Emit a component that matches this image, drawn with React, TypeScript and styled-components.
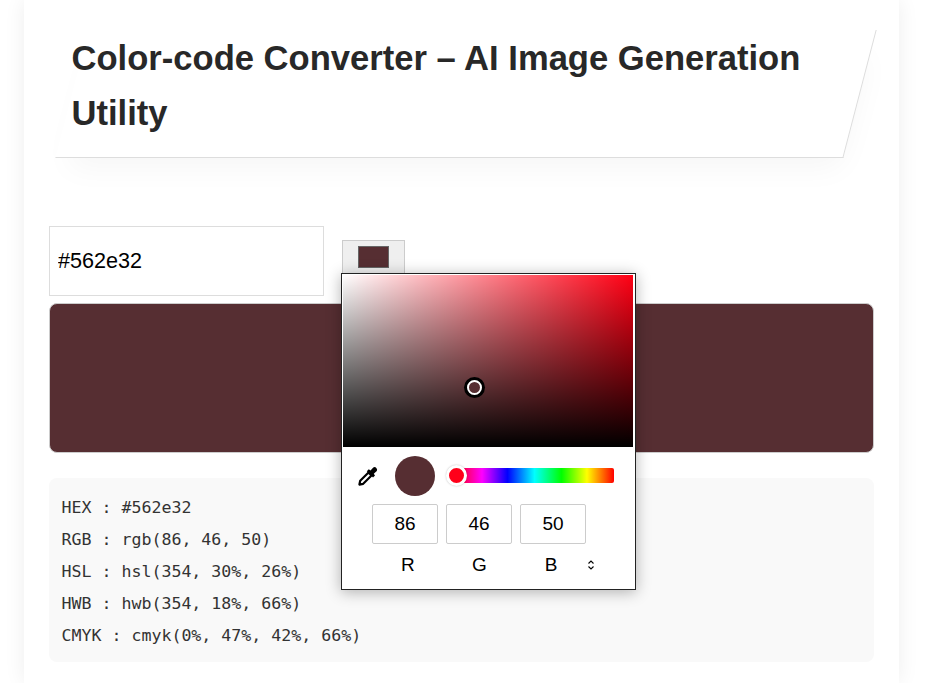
import * as React from 'react'
import styled, {createGlobalStyle} from 'styled-components'

const GlobalStyle = createGlobalStyle`
  html, body {
    margin: 0;
    height: 683px;
    overflow: hidden;
    background: #fff;
    font-family: "Liberation Sans", Arial, sans-serif;
  }
`

const Card = styled.main`
  box-sizing: border-box;
  width: 875px;
  height: 683px;
  margin-left: 24px;
  padding: 30px 25px 0;
  background: #fff;
  box-shadow: 0 0 20px rgba(0, 0, 0, 0.07);
`

const TitleBox = styled.div`
  position: relative;
  box-sizing: border-box;
  width: 821px;
  height: 128px;
  margin-left: 6px;
  padding: 0.5px 0 0 16.5px;
  &::before {
    content: '';
    position: absolute;
    inset: 0 16px 0 17px;
    background: #fff;
    border-right: 1px solid #ddd;
    border-bottom: 1px solid #ddd;
    transform: skewX(-14.6deg);
    box-shadow: 6px 18px 30px -8px rgba(0, 0, 0, 0.04);
  }
`

const Title = styled.h1`
  position: relative;
  margin: 0;
  font-size: 34.6px;
  font-weight: 700;
  line-height: 55px;
  color: #282828;
`

const ControlRow = styled.div`
  display: flex;
  align-items: flex-start;
  margin-top: 68px;
`

const HexInput = styled.input`
  box-sizing: border-box;
  width: 275px;
  height: 70px;
  padding: 0 8px;
  border: 1px solid #ddd;
  outline: none;
  font-family: inherit;
  font-size: 21.6px;
  color: #000;
`

const PickerAnchor = styled.div`
  position: relative;
  margin: 14px 0 0 18px;
`

const SwatchButton = styled.button`
  display: flex;
  align-items: flex-start;
  justify-content: center;
  box-sizing: border-box;
  width: 63px;
  height: 40px;
  padding: 5px 0 0;
  border: 1px solid #ccc;
  background: #efefef;
`

const SwatchChip = styled.span`
  display: block;
  box-sizing: border-box;
  width: 31px;
  height: 22px;
  border: 1px solid #666;
  background: #562e32;
`

const Popover = styled.div`
  position: absolute;
  z-index: 2;
  top: 33px;
  left: -1px;
  box-sizing: border-box;
  width: 295px;
  height: 317px;
  border: 1px solid #222;
  padding: 1px 2px 0 1px;
  background: #fff;
  box-shadow: 0 2px 14px rgba(0, 0, 0, 0.3);
`

const Saturation = styled.div`
  position: relative;
  height: 172px;
  background:
    linear-gradient(to top, #000, rgba(0, 0, 0, 0)),
    linear-gradient(to right, #fff, rgba(255, 255, 255, 0)),
    #ff0014;
`

const SatThumb = styled.span`
  position: absolute;
  top: 105px;
  left: 124px;
  box-sizing: border-box;
  width: 15px;
  height: 15px;
  border: 2px solid #fff;
  border-radius: 50%;
  background: #562e32;
  box-shadow: 0 0 0 3px #000;
`

const SliderRow = styled.div`
  display: flex;
  align-items: center;
  height: 57px;
  padding: 0 0 0 15px;
`

const EyeDropper = styled.svg`
  flex: none;
  width: 20px;
  height: 20px;
`

const PreviewDot = styled.span`
  flex: none;
  width: 40px;
  height: 40px;
  margin-left: 17px;
  border-radius: 50%;
  background: #562e32;
`

const HueTrack = styled.div`
  position: relative;
  width: 159px;
  height: 15px;
  margin-left: 20px;
  border-radius: 2px;
  background: linear-gradient(to right, #f00 0%, #f0f 17%, #00f 33%, #0ff 50%, #0f0 67%, #ff0 83%, #f00 100%);
`

const HueThumb = styled.span`
  position: absolute;
  top: -3px;
  left: -9px;
  box-sizing: border-box;
  width: 21px;
  height: 21px;
  border: 3px solid #fff;
  border-radius: 50%;
  background: #ff001a;
  box-shadow: 0 0 2px rgba(0, 0, 0, 0.25);
`

const FieldRow = styled.div`
  display: flex;
  gap: 8px;
  padding-left: 29px;
`

const Field = styled.input`
  box-sizing: border-box;
  width: 66px;
  height: 40px;
  border: 1px solid #ccc;
  border-radius: 2px;
  outline: none;
  text-align: center;
  font-family: inherit;
  font-size: 19px;
  color: #000;
`

const LabelRow = styled.div`
  display: flex;
  align-items: center;
  height: 42px;
  padding-left: 29px;
`

const ChannelLabel = styled.span`
  width: 71.6px;
  text-align: center;
  font-size: 19px;
  color: #000;
`

const ModeToggle = styled.svg`
  width: 8px;
  height: 12px;
`

const ColorBlock = styled.div`
  box-sizing: border-box;
  height: 150px;
  margin-top: 7px;
  border: 1px solid #ccc;
  border-radius: 8px;
  background: #562e32;
`

const CodeBlock = styled.pre`
  box-sizing: border-box;
  height: 184px;
  margin: 25px 0 0;
  padding: 14px 12.5px;
  border-radius: 8px;
  background: #f9f9f9;
  font-family: "DejaVu Sans Mono", monospace;
  font-size: 16.6px;
  line-height: 32px;
  color: #333;
`

const codeLines = [
  'HEX : #562e32',
  'RGB : rgb(86, 46, 50)',
  'HSL : hsl(354, 30%, 26%)',
  'HWB : hwb(354, 18%, 66%)',
  'CMYK : cmyk(0%, 47%, 42%, 66%)',
]

const channels = [
  {name: 'R', value: 86},
  {name: 'G', value: 46},
  {name: 'B', value: 50},
]

export default function App(): JSX.Element {
  return (
    <>
      <GlobalStyle />
      <Card>
        <TitleBox>
          <Title>Color-code Converter – AI Image Generation Utility</Title>
        </TitleBox>
        <ControlRow>
          <HexInput defaultValue={'#562e32'} />
          <PickerAnchor>
            <SwatchButton type={'button'}>
              <SwatchChip />
            </SwatchButton>
            <Popover>
              <Saturation>
                <SatThumb />
              </Saturation>
              <SliderRow>
                <EyeDropper viewBox='0 0 20 20' fill='none'>
                  <path
                    d='M10.5 6.5L2.2 14.8 1.4 18.6l3.8-0.8L13.5 9.5z'
                    stroke='#000'
                    strokeWidth='2.2'
                    strokeLinejoin='round'
                    fill='#fff'
                  />
                  <path
                    d='M8.8 5.2l2-2 1.7 1.2 2.8-3a2.6 2.6 0 0 1 3.5 3.5l-3 2.8 1.2 1.7-2 2z'
                    fill='#000'
                  />
                </EyeDropper>
                <PreviewDot />
                <HueTrack>
                  <HueThumb />
                </HueTrack>
              </SliderRow>
              <FieldRow>
                {channels.map((c) => (
                  <Field key={c.name} defaultValue={c.value} />
                ))}
              </FieldRow>
              <LabelRow>
                {channels.map((c) => (
                  <ChannelLabel key={c.name}>{c.name}</ChannelLabel>
                ))}
                <ModeToggle viewBox='0 0 8 12' fill='none' stroke='#000' strokeWidth='1.1'>
                  <path d='M1.5 4.5L4 2l2.5 2.5M1.5 7.5L4 10l2.5-2.5' />
                </ModeToggle>
              </LabelRow>
            </Popover>
          </PickerAnchor>
        </ControlRow>
        <ColorBlock />
        <CodeBlock>{codeLines.join('\n')}</CodeBlock>
      </Card>
    </>
  )
}
